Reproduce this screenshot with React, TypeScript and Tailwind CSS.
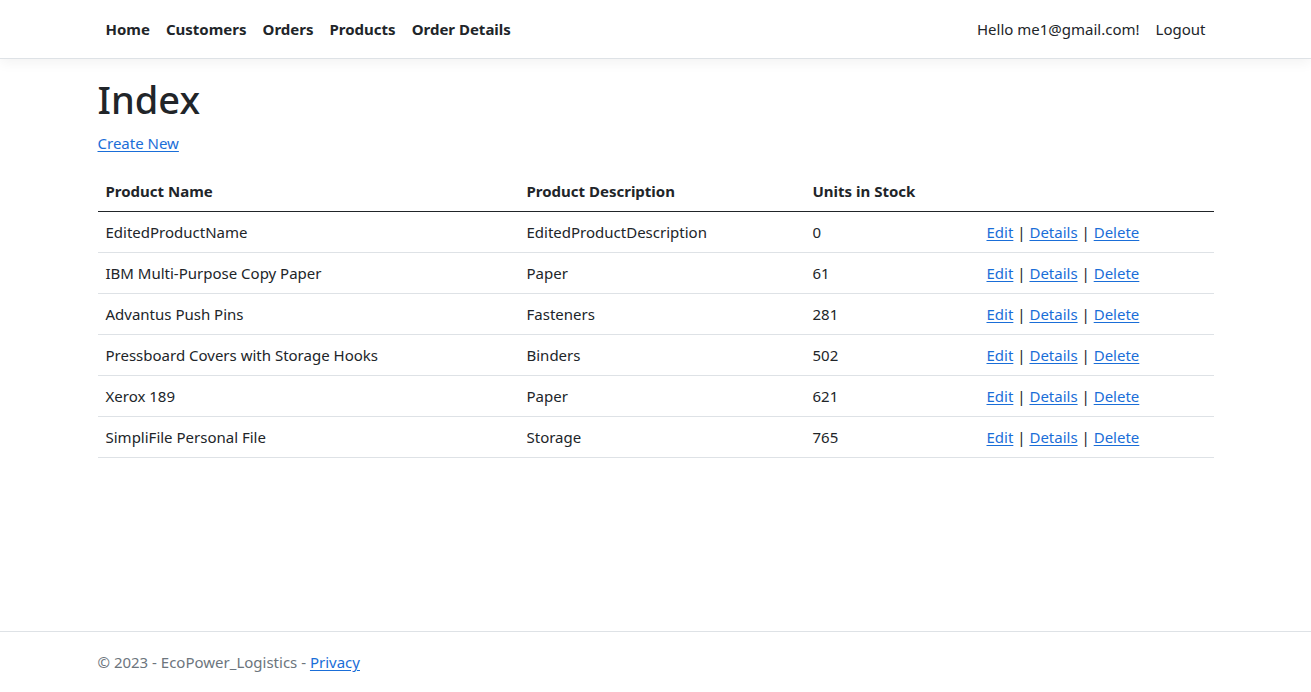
const products = [
  { name: "EditedProductName", description: "EditedProductDescription", stock: 0 },
  { name: "IBM Multi-Purpose Copy Paper", description: "Paper", stock: 61 },
  { name: "Advantus Push Pins", description: "Fasteners", stock: 281 },
  { name: "Pressboard Covers with Storage Hooks", description: "Binders", stock: 502 },
  { name: "Xerox 189", description: "Paper", stock: 621 },
  { name: "SimpliFile Personal File", description: "Storage", stock: 765 },
];

const navItems = ["Home", "Customers", "Orders", "Products", "Order Details"];

function ActionLink({ children }: { children: string }) {
  return (
    <a href="#" className="text-[#1a6ed8] underline underline-offset-2">
      {children}
    </a>
  );
}

export default function App() {
  return (
    <div
      className="min-h-screen flex flex-col bg-white text-[#212529] text-[15px] leading-6"
      style={{ fontFamily: '"Segoe UI", "Noto Sans", "Liberation Sans", sans-serif' }}
    >
      <header className="bg-white border-b border-[#dee2e6] shadow-[0_4px_12px_rgba(0,0,0,0.05)] mb-4">
        <nav className="max-w-[1140px] mx-auto px-3 py-2 flex items-center justify-between">
          <ul className="flex items-center">
            {navItems.map((item) => (
              <li key={item}>
                <a href="#" className="block px-2 py-[9px] font-bold text-[#212529]">
                  {item}
                </a>
              </li>
            ))}
          </ul>
          <ul className="flex items-center">
            <li>
              <span className="block px-2 py-[9px] text-[#212529]">Hello me1@gmail.com!</span>
            </li>
            <li>
              <a href="#" className="block px-2 py-[9px] text-[#212529]">
                Logout
              </a>
            </li>
          </ul>
        </nav>
      </header>

      <main className="max-w-[1140px] w-full mx-auto px-3 pb-4">
        <h1 className="text-[38px] leading-[48px] font-medium mb-2">Index</h1>
        <p className="mb-4">
          <a href="#" className="text-[#1a6ed8] underline underline-offset-2">
            Create New
          </a>
        </p>
        <table className="w-full border-collapse mb-4">
          <thead>
            <tr className="border-b border-[#212529]">
              <th className="text-left font-bold px-2 py-2 w-[421px]">Product Name</th>
              <th className="text-left font-bold px-2 py-2 w-[286px]">Product Description</th>
              <th className="text-left font-bold px-2 py-2 w-[174px]">Units in Stock</th>
              <th className="px-2 py-2"></th>
            </tr>
          </thead>
          <tbody>
            {products.map((p) => (
              <tr key={p.name} className="border-b border-[#dee2e6]">
                <td className="px-2 py-2">{p.name}</td>
                <td className="px-2 py-2">{p.description}</td>
                <td className="px-2 py-2">{p.stock}</td>
                <td className="px-2 py-2">
                  <ActionLink>Edit</ActionLink> | <ActionLink>Details</ActionLink> |{" "}
                  <ActionLink>Delete</ActionLink>
                </td>
              </tr>
            ))}
          </tbody>
        </table>
      </main>

      <footer className="mt-auto border-t border-[#dee2e6] text-[#6c757d] leading-[60px] whitespace-nowrap">
        <div className="max-w-[1140px] mx-auto px-3">
          &copy; 2023 - EcoPower_Logistics -{" "}
          <a href="#" className="text-[#1a6ed8] underline underline-offset-2">
            Privacy
          </a>
        </div>
      </footer>
    </div>
  );
}
